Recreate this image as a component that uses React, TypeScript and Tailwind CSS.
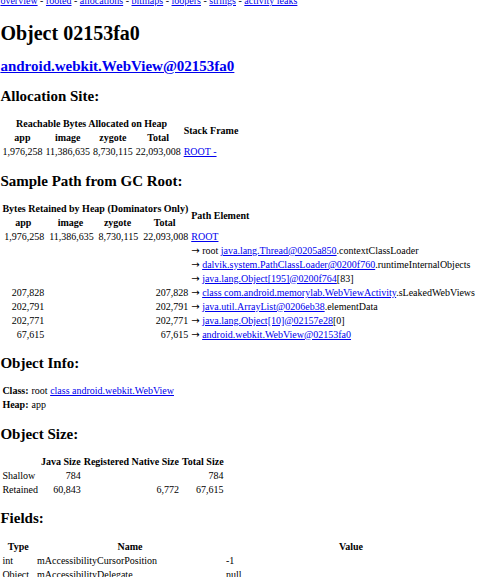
import React from 'react';

const A: React.FC<{ children: React.ReactNode }> = ({ children }) => (
  <a href="#" className="text-[#0000ee] underline">{children}</a>
);

const Arrow: React.FC = () => <span className="font-['DejaVu_Sans',sans-serif]">→</span>;

const H2: React.FC<{ children: React.ReactNode }> = ({ children }) => (
  <h2 className="my-[12.3px] text-[15px] leading-[17.25px] font-bold">{children}</h2>
);

const cell = 'px-[1px] py-[1px] leading-[10.95px]';
const th = `${cell} text-center font-bold`;
const thLeft = `${cell} text-left font-bold`;
const td = `${cell} text-left`;
const num = `${cell} text-right`;
const tableCls = 'border-separate border-spacing-[1px]';

const pathRows: { app: string; image: string; zygote: string; total: string; el: React.ReactNode }[] = [
  { app: '1,976,258', image: '11,386,635', zygote: '8,730,115', total: '22,093,008', el: <A>ROOT</A> },
  { app: '', image: '', zygote: '', total: '', el: <><Arrow /> root <A>java.lang.Thread@0205a850</A>.contextClassLoader</> },
  { app: '', image: '', zygote: '', total: '', el: <><Arrow /> <A>dalvik.system.PathClassLoader@0200f760</A>.runtimeInternalObjects</> },
  { app: '', image: '', zygote: '', total: '', el: <><Arrow /> <A>java.lang.Object[195]@0200f764</A>[83]</> },
  { app: '207,828', image: '', zygote: '', total: '207,828', el: <><Arrow /> <A>class com.android.memorylab.WebViewActivity</A>.sLeakedWebViews</> },
  { app: '202,791', image: '', zygote: '', total: '202,791', el: <><Arrow /> <A>java.util.ArrayList@0206eb38</A>.elementData</> },
  { app: '202,771', image: '', zygote: '', total: '202,771', el: <><Arrow /> <A>java.lang.Object[10]@02157e28</A>[0]</> },
  { app: '67,615', image: '', zygote: '', total: '67,615', el: <><Arrow /> <A>android.webkit.WebView@02153fa0</A></> },
];

const fields: [string, string, string][] = [
  ['int', 'mAccessibilityCursorPosition', '-1'],
  ['Object', 'mAccessibilityDelegate', 'null'],
  ['float', 'mAlpha', '1.0'],
  ['int', 'mAccessibilityTraversalAfterId', '-1'],
  ['boolean', 'mCachingFailed', 'false'],
];

export default function App() {
  return (
    <div className="h-[577px] w-full overflow-hidden bg-white">
      <div className="-mt-[5px] pl-[0.4px] font-['Liberation_Serif',serif] text-[10px] leading-[11.5px] text-black whitespace-nowrap">
        <div className="pb-[2px]">
          <A>overview</A> - <A>rooted</A> - <A>allocations</A> - <A>bitmaps</A> - <A>loopers</A> - <A>strings</A> - <A>activity leaks</A>
        </div>

        <h1 className="my-[13.4px] text-[20px] leading-[23px] font-bold">Object 02153fa0</h1>
        <H2><A>android.webkit.WebView@02153fa0</A></H2>

        <H2>Allocation Site:</H2>
        <table className={tableCls}>
          <thead>
            <tr>
              <th colSpan={4} className={th}>Reachable Bytes Allocated on Heap</th>
              <th rowSpan={2} className={th}>Stack Frame</th>
            </tr>
            <tr>
              <th className={th}>app</th>
              <th className={th}>image</th>
              <th className={th}>zygote</th>
              <th className={th}>Total</th>
            </tr>
          </thead>
          <tbody>
            <tr>
              <td className={num}>1,976,258</td>
              <td className={num}>11,386,635</td>
              <td className={num}>8,730,115</td>
              <td className={num}>22,093,008</td>
              <td className={td}><A>ROOT -</A></td>
            </tr>
          </tbody>
        </table>

        <H2>Sample Path from GC Root:</H2>
        <table className={tableCls}>
          <thead>
            <tr>
              <th colSpan={4} className={th}>Bytes Retained by Heap (Dominators Only)</th>
              <th rowSpan={2} className={thLeft}>Path Element</th>
            </tr>
            <tr>
              <th className={th}>app</th>
              <th className={th}>image</th>
              <th className={th}>zygote</th>
              <th className={th}>Total</th>
            </tr>
          </thead>
          <tbody>
            {pathRows.map((r, i) => (
              <tr key={i}>
                <td className={num}>{r.app}</td>
                <td className={num}>{r.image}</td>
                <td className={num}>{r.zygote}</td>
                <td className={num}>{r.total}</td>
                <td className={td}>{r.el}</td>
              </tr>
            ))}
          </tbody>
        </table>

        <H2>Object Info:</H2>
        <table className={tableCls}>
          <tbody>
            <tr>
              <th className={thLeft}>Class:</th>
              <td className={td}>root <A>class android.webkit.WebView</A></td>
            </tr>
            <tr>
              <th className={thLeft}>Heap:</th>
              <td className={td}>app</td>
            </tr>
          </tbody>
        </table>

        <H2>Object Size:</H2>
        <table className={tableCls}>
          <thead>
            <tr>
              <th className={th}></th>
              <th className={th}>Java Size</th>
              <th className={th}>Registered Native Size</th>
              <th className={th}>Total Size</th>
            </tr>
          </thead>
          <tbody>
            <tr>
              <td className={td}>Shallow</td>
              <td className={num}>784</td>
              <td className={num}></td>
              <td className={num}>784</td>
            </tr>
            <tr>
              <td className={td}>Retained</td>
              <td className={num}>60,843</td>
              <td className={num}>6,772</td>
              <td className={num}>67,615</td>
            </tr>
          </tbody>
        </table>

        <H2>Fields:</H2>
        <table className={tableCls}>
          <thead>
            <tr>
              <th className={`${th} w-[33px]`}>Type</th>
              <th className={`${th} w-[192px]`}>Name</th>
              <th className={`${th} w-[268px]`}>Value</th>
            </tr>
          </thead>
          <tbody>
            {fields.map(([t, n, v]) => (
              <tr key={n}>
                <td className={td}>{t}</td>
                <td className={td}>{n}</td>
                <td className={td}>{v}</td>
              </tr>
            ))}
          </tbody>
        </table>
      </div>
    </div>
  );
}
